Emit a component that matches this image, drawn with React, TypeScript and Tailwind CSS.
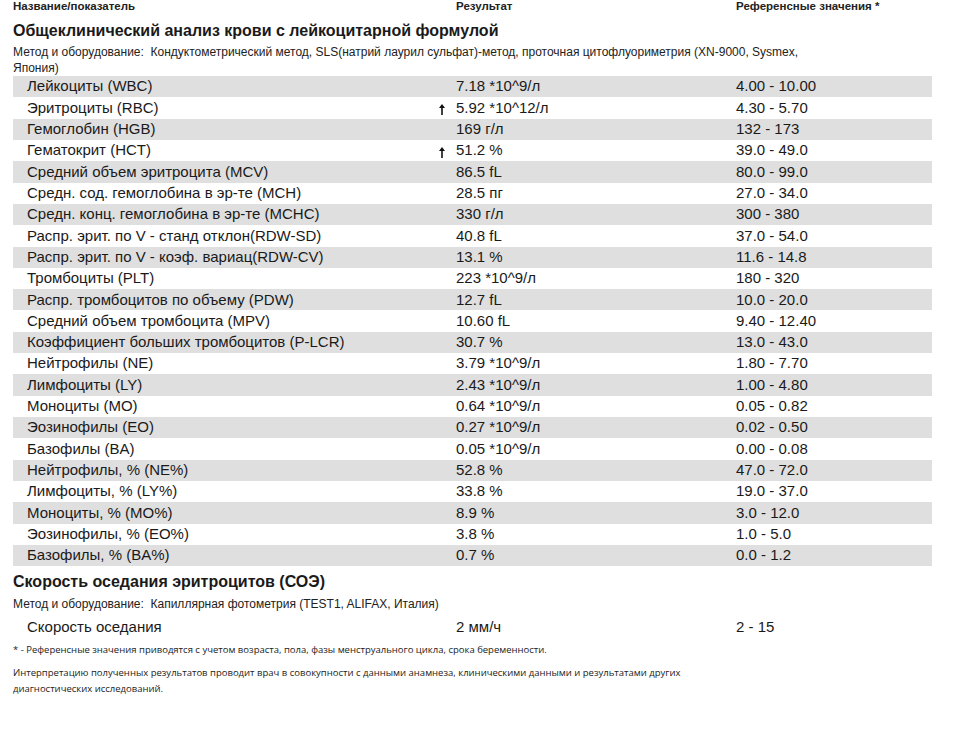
import React from 'react';

type Row = { name: string; result: string; ref: string; up?: boolean };

const rows: Row[] = [
  { name: 'Лейкоциты (WBC)', result: '7.18 *10^9/л', ref: '4.00 - 10.00' },
  { name: 'Эритроциты (RBC)', result: '5.92 *10^12/л', ref: '4.30 - 5.70', up: true },
  { name: 'Гемоглобин (HGB)', result: '169 г/л', ref: '132 - 173' },
  { name: 'Гематокрит (HCT)', result: '51.2 %', ref: '39.0 - 49.0', up: true },
  { name: 'Средний объем эритроцита (MCV)', result: '86.5 fL', ref: '80.0 - 99.0' },
  { name: 'Средн. сод. гемоглобина в эр-те (MCH)', result: '28.5 пг', ref: '27.0 - 34.0' },
  { name: 'Средн. конц. гемоглобина в эр-те (MCHC)', result: '330 г/л', ref: '300 - 380' },
  { name: 'Распр. эрит. по V - станд отклон(RDW-SD)', result: '40.8 fL', ref: '37.0 - 54.0' },
  { name: 'Распр. эрит. по V - коэф. вариац(RDW-CV)', result: '13.1 %', ref: '11.6 - 14.8' },
  { name: 'Тромбоциты (PLT)', result: '223 *10^9/л', ref: '180 - 320' },
  { name: 'Распр. тромбоцитов по объему (PDW)', result: '12.7 fL', ref: '10.0 - 20.0' },
  { name: 'Средний объем тромбоцита (MPV)', result: '10.60 fL', ref: '9.40 - 12.40' },
  { name: 'Коэффициент больших тромбоцитов (P-LCR)', result: '30.7 %', ref: '13.0 - 43.0' },
  { name: 'Нейтрофилы (NE)', result: '3.79 *10^9/л', ref: '1.80 - 7.70' },
  { name: 'Лимфоциты (LY)', result: '2.43 *10^9/л', ref: '1.00 - 4.80' },
  { name: 'Моноциты (MO)', result: '0.64 *10^9/л', ref: '0.05 - 0.82' },
  { name: 'Эозинофилы (EO)', result: '0.27 *10^9/л', ref: '0.02 - 0.50' },
  { name: 'Базофилы (BA)', result: '0.05 *10^9/л', ref: '0.00 - 0.08' },
  { name: 'Нейтрофилы, % (NE%)', result: '52.8 %', ref: '47.0 - 72.0' },
  { name: 'Лимфоциты, % (LY%)', result: '33.8 %', ref: '19.0 - 37.0' },
  { name: 'Моноциты, % (MO%)', result: '8.9 %', ref: '3.0 - 12.0' },
  { name: 'Эозинофилы, % (EO%)', result: '3.8 %', ref: '1.0 - 5.0' },
  { name: 'Базофилы, % (BA%)', result: '0.7 %', ref: '0.0 - 1.2' },
];

function ResultRow({ row, gray }: { row: Row; gray: boolean }) {
  return (
    <div className={`flex items-center h-[21.32px] text-[15px] ${gray ? 'bg-[#dfdfdf]' : ''}`}>
      <div className="w-[424px] pl-[14px] truncate">{row.name}</div>
      <div className="w-[19px] pl-[2px] flex">
        {row.up && (
          <svg width="6" height="11" viewBox="0 0 6 11" className="mt-[3px]">
            <path d="M3 0 L6 4 L3.8 4 L3.8 11 L2.2 11 L2.2 4 L0 4 Z" fill="#111" />
          </svg>
        )}
      </div>
      <div className="w-[280px]">{row.result}</div>
      <div className="flex-1">{row.ref}</div>
    </div>
  );
}

export default function App() {
  return (
    <div className="w-[953px] h-[734px] bg-white text-[#1a1a1a] font-['Liberation_Sans',Arial,sans-serif] overflow-hidden">
      <div className="pl-[13px] w-[932px]">
        {/* Header */}
        <div className="flex h-[13px] items-center text-[11.5px] font-bold text-[#222]">
          <div className="w-[443px]">Название/показатель</div>
          <div className="w-[280px]">Результат</div>
          <div>Референсные значения *</div>
        </div>

        {/* CBC */}
        <h1 className="mt-[8px] text-[16px] font-bold leading-[20px]">
          Общеклинический анализ крови с лейкоцитарной формулой
        </h1>
        <p className="mt-[3px] text-[12px] leading-[16px] w-[800px] text-[#222]">
          Метод и оборудование:&nbsp; Кондуктометрический метод, SLS(натрий лаурил сульфат)-метод, проточная цитофлуориметрия (XN-9000, Sysmex, Япония)
        </p>
        <div>
          {rows.map((r, i) => (
            <ResultRow key={r.name} row={r} gray={i % 2 === 0} />
          ))}
        </div>

        {/* ESR */}
        <h2 className="mt-[6px] text-[16px] font-bold leading-[20px]">Скорость оседания эритроцитов (СОЭ)</h2>
        <p className="mt-[4px] text-[12px] leading-[17px] text-[#222]">
          Метод и оборудование:&nbsp; Капиллярная фотометрия (TEST1, ALIFAX, Италия)
        </p>
        <div className="mt-[3px]">
          <ResultRow row={{ name: 'Скорость оседания', result: '2 мм/ч', ref: '2 - 15' }} gray={false} />
        </div>

        {/* Notes */}
        <div className="mt-[4px] font-['Open_Sans',sans-serif] text-[9.5px] text-[#222]">
          <p className="leading-[16px]">
            * - Референсные значения приводятся с учетом возраста, пола, фазы менструального цикла, срока беременности.
          </p>
          <p className="mt-[7px] leading-[16px] w-[700px]">
            Интерпретацию полученных результатов проводит врач в совокупности с данными анамнеза, клиническими данными и результатами других диагностических исследований.
          </p>
        </div>
      </div>
    </div>
  );
}
